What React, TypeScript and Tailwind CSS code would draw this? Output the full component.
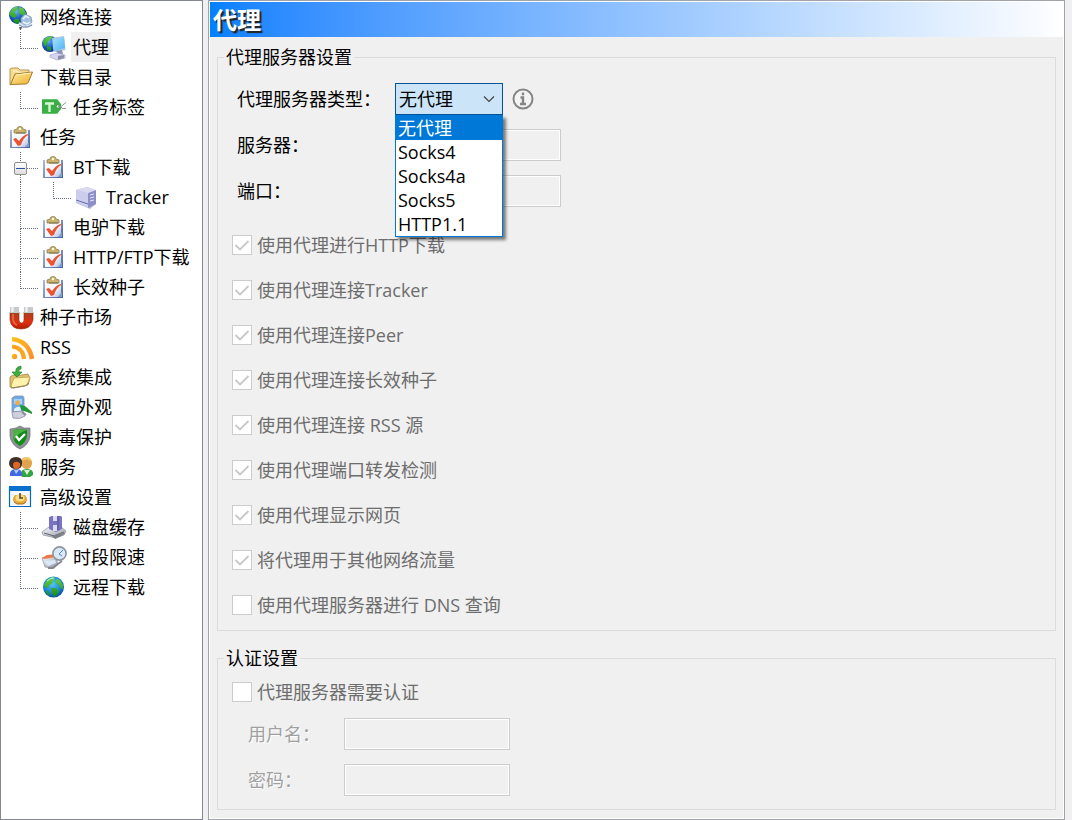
import {ReactNode, useState} from "react";

const Icon = ({children}: { children: ReactNode }) => (
    <svg viewBox="0 -1 24 24" className="w-6 h-6 shrink-0 overflow-visible" aria-hidden="true">{children}</svg>
);

const Gradients = () => (
    <svg width="0" height="0" className="absolute" aria-hidden="true">
        <defs>
            <radialGradient id="sea" cx="0.4" cy="0.3" r="0.75">
                <stop offset="0" stopColor="#6fb4f0"/>
                <stop offset="0.5" stopColor="#1f62c8"/>
                <stop offset="1" stopColor="#0a2784"/>
            </radialGradient>
            <radialGradient id="water" cx="0.45" cy="0.35" r="0.65">
                <stop offset="0" stopColor="#58c8f0"/>
                <stop offset="0.65" stopColor="#1a86d6"/>
                <stop offset="1" stopColor="#0a4aa4"/>
            </radialGradient>
            <linearGradient id="land" x1="0" y1="0" x2="0" y2="1">
                <stop offset="0" stopColor="#6cd048"/>
                <stop offset="1" stopColor="#128a1e"/>
            </linearGradient>
            <linearGradient id="metal" x1="0" y1="0" x2="1" y2="1">
                <stop offset="0" stopColor="#ffffff"/>
                <stop offset="1" stopColor="#8a8fa0"/>
            </linearGradient>
            <linearGradient id="gold" x1="0" y1="0" x2="1" y2="1">
                <stop offset="0" stopColor="#fff0a0"/>
                <stop offset="1" stopColor="#edac2c"/>
            </linearGradient>
            <linearGradient id="screen" x1="0" y1="0" x2="1" y2="1">
                <stop offset="0" stopColor="#a4e6ff"/>
                <stop offset="1" stopColor="#4eb0f4"/>
            </linearGradient>
            <linearGradient id="board" x1="0" y1="0" x2="1" y2="1">
                <stop offset="0" stopColor="#ffffff"/>
                <stop offset="0.6" stopColor="#f2f5fc"/>
                <stop offset="1" stopColor="#a8bce0"/>
            </linearGradient>
            <linearGradient id="frame" x1="0" y1="0" x2="1" y2="1">
                <stop offset="0" stopColor="#b0bed8"/>
                <stop offset="1" stopColor="#44609c"/>
            </linearGradient>
            <linearGradient id="red" x1="0" y1="0" x2="0" y2="1">
                <stop offset="0" stopColor="#a0441c"/>
                <stop offset="0.6" stopColor="#e03010"/>
                <stop offset="1" stopColor="#b01c04"/>
            </linearGradient>
            <linearGradient id="orange" x1="0" y1="0" x2="1" y2="1">
                <stop offset="0" stopColor="#ffc020"/>
                <stop offset="1" stopColor="#ff8c28"/>
            </linearGradient>
        </defs>
    </svg>
);

const NetworkIcon = () => (
    <Icon>
        <circle cx="9" cy="9" r="9" fill="url(#sea)"/>
        <path d="M1 6l3-4 5-2-1 4-3 2 3 3-2 3-3-1-3-3zM10 1l4 1 3 5-3 3-4-3zM6 13l4 0 1 4-3 1-4-3z" fill="url(#land)"/>
        <path d="M12 12l4-4 6 3 1 5-5 4-6-2z" fill="#a4c0dc" stroke="#7893b2" strokeWidth="0.8"/>
        <path d="M14 13l3-3 3 2M14 16l4 2 3-2" stroke="#edf6ff" strokeWidth="1.5" fill="none"/>
        <path d="M10 17l4 3q4 2 9-2" fill="none" stroke="#d7e2f0" strokeWidth="2.4"/>
        <path d="M10 19l4 2q5 1 9-2" fill="none" stroke="#6884a8" strokeWidth="1"/>
        <path d="M10 21h3l-1 3h-1z" fill="#555b60"/>
    </Icon>
);

const ProxyIcon = () => (
    <Icon>
        <circle cx="8" cy="8" r="8" fill="url(#sea)"/>
        <path d="M1 5l4-4 6-1-2 3-3 2-1 4-3 1zM5 10l4 1v4l-4-1z" fill="url(#land)"/>
        <path d="M10 2l12-2 1.500 14-12 2z" fill="#a9c6e4"/>
        <path d="M11 4l11-3 1 11-11 3z" fill="url(#screen)"/>
        <path d="M14 15l6-1 1 4h-5z" fill="#8d90b6"/>
        <path d="M8 19l7-2 8 2v3l-8 2-7-3z" fill="#d6d4ee" stroke="#a3a3cb" strokeWidth="0.7"/>
        <path d="M16 20l6-1v3l-6 2z" fill="#8d8fa8"/>
    </Icon>
);

const FolderIcon = () => (
    <Icon>
        <path d="M1 19V3l2-1h6l2 2h9v4z" fill="#f6dd93" stroke="#b8965a"/>
        <path d="M4 5h4l2 2h9" stroke="#fff6d0" fill="none"/>
        <path d="M1.500 18.500L6 8l17.500-2-4 10q-1 2-3 2z" fill="url(#gold)" stroke="#a8792b"/>
        <path d="M7 9l15-2" stroke="#fff5bd"/>
    </Icon>
);

const TagIcon = () => (
    <Icon>
        <path d="M0 3h15l4 5v5l-4 5H0z" fill="#3cae46"/>
        <path d="M0 3.500h15M0 17.500h15" stroke="#64c66a"/>
        <path d="M3 7.500h9M7.500 7v9" stroke="#d6f8d2" strokeWidth="2.400" fill="none"/>
        <circle cx="16" cy="10.500" r="1.700" fill="#fff" stroke="#23822a" strokeWidth="0.7"/>
        <path d="M16 10.500h3l5-4M19 10.500l1 2h4" stroke="#8d9892" fill="none"/>
    </Icon>
);

const TaskIcon = () => (
    <Icon>
        <path d="M1 4h20v18H1z" fill="url(#frame)"/>
        <path d="M3 4h16v17H3z" fill="url(#board)"/>
        <path d="M5 7V4l3-1q0-2.500 3-2.500T14 3l3 1v3z" fill="#cbb36c" stroke="#8f8050" strokeWidth="0.8"/>
        <path d="M7 7h9" stroke="#786e4c"/>
        <circle cx="11" cy="3" r="1.200" fill="#fffbe4"/>
        <path d="M4 13l3-1 3 3q4-6 9-7l0 1q-5 3-7 10l-3 1z" fill="#ea5430"/>
        <path d="M16 21l4-5v5z" fill="#7f9ad0"/>
    </Icon>
);

const TrackerIcon = () => (
    <Icon>
        <path d="M1 4l11-3 9 3v14l-6 5-14-6z" fill="#b9b9df"/>
        <path d="M1 4l12 3v15L1 16z" fill="#cccdec"/>
        <path d="M13 7l8-3v14l-8 4z" fill="#8d8fc6"/>
        <path d="M1 4l11-3 9 3-8 3z" fill="#d9daf2"/>
        <path d="M15 9l4-1M15 12l4-1M15 15l4-1" stroke="#e8e8ff"/>
        <path d="M1 14l12 4" stroke="#6467ae"/>
    </Icon>
);

const MagnetIcon = () => (
    <Icon>
        <path d="M1 6v8q1 9 11 9t12-9V6h-9v8q0 3-2.500 3T10 14V6z" fill="url(#red)" stroke="#8e2a12" strokeWidth="0.6"/>
        <path d="M1 1h9v6H1zM15 1h9v6h-9z" fill="#c6cacb"/>
        <path d="M3.500 1v5M17.500 1v5" stroke="#eef1f1" strokeWidth="2.400"/>
        <path d="M4 8v6q1 4 4 5" fill="none" stroke="#ee6a44" strokeWidth="1.600"/>
    </Icon>
);

const RssIcon = () => (
    <Icon>
        <circle cx="5.500" cy="20.500" r="2.700" fill="url(#orange)"/>
        <path d="M3 10.500q11 1 12 12.500" fill="none" stroke="#ffa321" strokeWidth="4.200"/>
        <path d="M3 3q17 2 20 20" fill="none" stroke="url(#orange)" strokeWidth="4.600"/>
    </Icon>
);

const IntegrateIcon = () => (
    <Icon>
        <path d="M1 21V11l3-2 3 1 12-2 2 4-2 7-14 3z" fill="#ddc070" stroke="#a5873c" strokeWidth="0.8"/>
        <path d="M2 20l3-8 16-1-3 8-14 3z" fill="#fff2ac" stroke="#c2a650" strokeWidth="0.8"/>
        <path d="M2 22l14-2 4-3" stroke="#8f8467" fill="none"/>
        <path d="M12 0q-6 1-5 6H3l5 5 5-5h-3q-1-3 2-3z" fill="#3fae3c" stroke="#23852a" strokeWidth="0.7"/>
    </Icon>
);

const AppearanceIcon = () => (
    <Icon>
        <path d="M3 2l3-2h8l1 2v13l-12 1z" fill="#6fa9e4" stroke="#8592ae" strokeWidth="0.8"/>
        <path d="M5 3h8v5H5z" fill="#a6d2fa"/>
        <path d="M6 6l3-2 2 2-1 3H7z" fill="#efac3b"/>
        <path d="M5 13q4-4 7-1v3H5z" fill="#dff2ff"/>
        <path d="M3 16l10-1 3 5q-5 4-12 2z" fill="#cfd0dc" stroke="#8b8da2" strokeWidth="0.8"/>
        <path d="M11 9l5 1 7 6v2l-5-2-6-2z" fill="#239638"/>
        <path d="M13 16l4 3" stroke="#85889c" strokeWidth="2"/>
    </Icon>
);

const ShieldIcon = () => (
    <Icon>
        <path d="M11 0l4 2h6v8q-1 9-10 13Q2 19 1 10V3l6-1z" fill="#8d9394" stroke="#6c7274" strokeWidth="0.7"/>
        <path d="M11 3l7 1v6q-1 6-7 10-7-4-7-10V4z" fill="#128c18"/>
        <path d="M11 3l7 1q-8 2-13 10l-1-4V4z" fill="#4fb045"/>
        <path d="M7 10l3 4 6-6" fill="none" stroke="#fff" strokeWidth="2.200"/>
    </Icon>
);

const UsersIcon = () => (
    <Icon>
        <path d="M12 19q-1-6 6-6t6 6l-3 2h-8z" fill="#35a440"/>
        <path d="M12 7q0-6 5-6t6 5q0 7-5 7t-6-6z" fill="#e0a24a"/>
        <path d="M13 5q1-4 5-4t4 4l-4-2z" fill="#f4cc6c"/>
        <path d="M15 14l3 5 3-5z" fill="#d9f2d4"/>
        <path d="M1 20q-1-7 6-7t6 7z" fill="#4068e0"/>
        <path d="M0 8q0-7 7-7t6 7q0 5-6 5t-7-5z" fill="#40302a"/>
        <path d="M4 8q1-3 5-2 3 1 2 4t-4 3-3-5z" fill="#dc6828"/>
        <path d="M5 14l2 4 3-4z" fill="#b4ccff"/>
    </Icon>
);

const AdvancedIcon = () => (
    <Icon>
        <path d="M0.500 1.500h21v19h-21z" fill="#f4f8ff" stroke="#0a68c0" strokeWidth="1.200"/>
        <path d="M0 0h22v5H0z" fill="#0a70ce"/>
        <path d="M4 12l2-3h3l2-1 3 1h2l2 3v3l-3 3H8l-4-3z" fill="#e4aa3c"/>
        <ellipse cx="11" cy="12" rx="4.500" ry="3.500" fill="#f8dc80"/>
        <path d="M11 7v5l3 0" stroke="#4f453c" strokeWidth="1.500" fill="none"/>
        <path d="M5 16l3 2h6l3-2" stroke="#a46e17" fill="none"/>
    </Icon>
);

const DiskIcon = () => (
    <Icon>
        <path d="M0 16l7-5h12l5 4-2 4-8 3-13-3z" fill="url(#metal)" stroke="#9497a0" strokeWidth="0.800"/>
        <path d="M7 1l3-1h9l1 1v12l-6 3-7-3z" fill="#7a74c0"/>
        <path d="M11 0h4v5h-4zM11 9h4v6h-4z" fill="#dcdcf0"/>
        <path d="M16 0v14" stroke="#55509c"/>
        <path d="M2 17l10 3 10-4" stroke="#5e6369" fill="none"/>
        <path d="M10 20l3 3 6-3 4-3-2-1z" fill="#7b7e84"/>
    </Icon>
);

const ScheduleIcon = () => (
    <Icon>
        <path d="M0 12l13-2 3 8-7 4-6-1z" fill="url(#metal)" stroke="#98a0ac" strokeWidth="0.8"/>
        <path d="M0 12l5-3 10-1-1 3-12 2z" fill="#ed7848"/>
        <path d="M2 15l11-1 1 3-8 3z" fill="#dbe8f8"/>
        <circle cx="17.500" cy="7.500" r="6.600" fill="#dbe9f5" stroke="#8b96a2" strokeWidth="1.600"/>
        <path d="M21 4l-4 4 3 2" fill="none" stroke="#4d86c4"/>
        <path d="M6 22h5l5-4 4-3" stroke="#85878c" strokeWidth="1.800" fill="none"/>
    </Icon>
);

const GlobeIcon = () => (
    <Icon>
        <circle cx="11.500" cy="11" r="10.500" fill="url(#water)"/>
        <path d="M2 9l3-5 5-3 3 1-2 3-1 3-3 1-1 3-3-1zM9 12l5 0 3 3-2 4-3 2-2-4zM14 3l4 1 3 5 0 4-3-1-1-3-3-2zM3 14l4 2 1 4-3-2z" fill="url(#land)"/>
        <path d="M5 5q3-3 7-3" stroke="#b4f2d8" fill="none"/>
    </Icon>
);

type Line = 'tee' | 'end' | 'pipe';

type TreeItem = {
    name: string;
    icon: () => ReactNode;
    lines?: Line[];
    toggle?: boolean;
};

const items: TreeItem[] = [
    {name: '网络连接', icon: NetworkIcon},
    {name: '代理', icon: ProxyIcon, lines: ['end']},
    {name: '下载目录', icon: FolderIcon},
    {name: '任务标签', icon: TagIcon, lines: ['end']},
    {name: '任务', icon: TaskIcon},
    {name: 'BT下载', icon: TaskIcon, lines: ['tee'], toggle: true},
    {name: 'Tracker', icon: TrackerIcon, lines: ['pipe', 'end']},
    {name: '电驴下载', icon: TaskIcon, lines: ['tee']},
    {name: 'HTTP/FTP下载', icon: TaskIcon, lines: ['tee']},
    {name: '长效种子', icon: TaskIcon, lines: ['end']},
    {name: '种子市场', icon: MagnetIcon},
    {name: 'RSS', icon: RssIcon},
    {name: '系统集成', icon: IntegrateIcon},
    {name: '界面外观', icon: AppearanceIcon},
    {name: '病毒保护', icon: ShieldIcon},
    {name: '服务', icon: UsersIcon},
    {name: '高级设置', icon: AdvancedIcon},
    {name: '磁盘缓存', icon: DiskIcon, lines: ['tee']},
    {name: '时段限速', icon: ScheduleIcon, lines: ['tee']},
    {name: '远程下载', icon: GlobeIcon, lines: ['end']},
];

const Connector = ({line}: { line: Line }) => (
    <div className="w-[33px] h-full pl-[11px] shrink-0">
        <div className={`h-[17px] w-[18px] border-l border-dotted border-gray-500 ${line === 'pipe' ? '' : 'border-b'}`}/>
        {line !== 'end' && <div className="h-[13px] border-l border-dotted border-gray-500"/>}
    </div>
);

const Sidebar = () => {
    const [selected, setSelected] = useState('代理');
    const [open, setOpen] = useState(true);
    return (
        <nav className="w-[203px] shrink-0 bg-white border border-[#828790] pl-2 pt-px">
            <ul>
                {items.filter((item) => open || item.name !== 'Tracker').map((item) => (
                    <li key={item.name} className="relative flex items-center h-[30px]">
                        {item.lines?.map((line, index) => <Connector line={line} key={index}/>)}
                        {item.toggle && (
                            <button type="button" aria-label="BT下载" onClick={() => setOpen(!open)}
                                    className="absolute left-[5px] top-[10px] flex items-center justify-center w-[13px] h-[13px] border border-[#919191] rounded-xs bg-linear-to-b from-white to-[#dcdcdc]">
                                <span className="w-[9px] h-px bg-[#2b4fa5]"/>
                            </button>
                        )}
                        <item.icon/>
                        <button type="button" onClick={() => setSelected(item.name)}
                                className={`ml-[5px] px-[2px] h-[30px] whitespace-nowrap ${selected === item.name ? 'bg-[#f0f0f0]' : ''}`}>
                            {item.name}
                        </button>
                    </li>
                ))}
            </ul>
        </nav>
    );
};

const Check = ({id, label, checked}: { id: string; label: string; checked?: boolean }) => (
    <div className="flex items-center gap-[5px] text-[#6d6d6d]">
        <div className="grid">
            <input id={id} type="checkbox" defaultChecked={checked} disabled
                   className="appearance-none w-5 h-5 bg-white border border-[#cccccc] col-start-1 row-start-1"/>
            {checked && (
                <svg viewBox="0 0 20 20" className="w-5 h-5 col-start-1 row-start-1 pointer-events-none" aria-hidden="true">
                    <path d="M3.500 10l4.500 4.500 8.500-8.500" fill="none" stroke="#c8c8c8" strokeWidth="1.800"/>
                </svg>
            )}
        </div>
        <label htmlFor={id}>{label}</label>
    </div>
);

const TextBox = ({id, type = 'text'}: { id: string; type?: string }) => (
    <input id={id} type={type} disabled
           className="w-[166px] h-8 px-1 bg-[#f0f0f0] border border-[#cccccc] inset-ring inset-ring-white"/>
);

const types = ['无代理', 'Socks4', 'Socks4a', 'Socks5', 'HTTP1.1'];

const ProxyType = () => {
    const [value, setValue] = useState(types[0]);
    return (
        <div className="relative w-[108px]">
            <select id="proxy-type" value={value} onChange={(e) => setValue(e.target.value)}
                    className="appearance-none block w-full h-8 pl-[3px] bg-[#cce4f7] border border-[#005499] outline-none">
                {types.map((type) => <option key={type}>{type}</option>)}
            </select>
            <svg viewBox="0 0 12 8" className="absolute right-2 top-3 w-3 h-2 pointer-events-none" aria-hidden="true">
                <path d="M1 1.500l5 5 5-5" fill="none" stroke="#404040" strokeWidth="1.100"/>
            </svg>
            <ul className="absolute left-0 top-full z-10 w-full bg-white border border-[#0078d7] shadow-[3px_3px_3px_rgba(0,0,0,0.5)]">
                {types.map((type) => (
                    <li key={type} onClick={() => setValue(type)}
                        className={`h-6 leading-6 pl-[2px] ${type === value ? 'bg-[#0078d7] text-white' : ''}`}>
                        {type}
                    </li>
                ))}
            </ul>
        </div>
    );
};

const usages = [
    '使用代理进行HTTP下载',
    '使用代理连接Tracker',
    '使用代理连接Peer',
    '使用代理连接长效种子',
    '使用代理连接 RSS 源',
    '使用代理端口转发检测',
    '使用代理显示网页',
    '将代理用于其他网络流量',
    '使用代理服务器进行 DNS 查询',
];

const App = () => {
    return (
        <div className="flex min-h-screen gap-[5px] pr-[7px] bg-[#f0f0f0] text-black text-[18px] leading-6 font-['Open_Sans','Noto_Sans_CJK_SC',sans-serif]">
            <Gradients/>
            <Sidebar/>
            <main className="flex-grow flex flex-col border border-[#a0a3aa] inset-ring inset-ring-white p-px">
                <h1 className="h-[35px] pl-[3px] flex items-center bg-linear-to-r from-[#0080ff] to-white text-white text-[24px] font-bold [text-shadow:2px_2px_1px_#222]">
                    代理
                </h1>
                <div className="px-[7px] pt-2 pb-2">
                    <fieldset className="border border-[#dcdcdc] pb-px">
                        <legend className="ml-[6px] px-[2px]">代理服务器设置</legend>
                        <div className="flex flex-col gap-[14px] pl-[19px] pt-[14px]">
                            <div className="flex items-center">
                                <label htmlFor="proxy-type" className="w-[158px]">代理服务器类型：</label>
                                <ProxyType/>
                                <svg viewBox="0 0 22 22" className="ml-[9px] w-[22px] h-[22px]" aria-hidden="true">
                                    <circle cx="11" cy="11" r="9.500" fill="#f4f4f4" stroke="#858585" strokeWidth="2"/>
                                    <path d="M11 4.500v2.800M8.500 9.500H11v6M8 16h6" fill="none" stroke="#858585" strokeWidth="2.400"/>
                                </svg>
                            </div>
                            <div className="flex items-center">
                                <label htmlFor="server" className="w-[158px]">服务器：</label>
                                <TextBox id="server"/>
                            </div>
                            <div className="flex items-center">
                                <label htmlFor="port" className="w-[158px]">端口：</label>
                                <TextBox id="port"/>
                            </div>
                        </div>
                        <div className="flex flex-col gap-[21px] pl-[14px] pt-[26px] pb-3">
                            {
                                usages.map((label, index) => (
                                    <Check key={label} id={`usage-${index}`} label={label} checked={index < 8}/>
                                ))
                            }
                        </div>
                    </fieldset>
                    <fieldset className="border border-[#dcdcdc] mt-[15px] pb-[13px]">
                        <legend className="ml-[6px] px-[2px]">认证设置</legend>
                        <div className="pl-[14px] pt-[10px]">
                            <Check id="auth" label="代理服务器需要认证"/>
                        </div>
                        <div className="flex flex-col gap-[14px] pl-[30px] pt-[14px] text-[#a0a0a0] [text-shadow:1px_1px_0_white]">
                            <div className="flex items-center">
                                <label htmlFor="user" className="w-24">用户名：</label>
                                <TextBox id="user"/>
                            </div>
                            <div className="flex items-center">
                                <label htmlFor="password" className="w-24">密码：</label>
                                <TextBox id="password" type="password"/>
                            </div>
                        </div>
                    </fieldset>
                </div>
            </main>
        </div>
    );
};

export default App;
